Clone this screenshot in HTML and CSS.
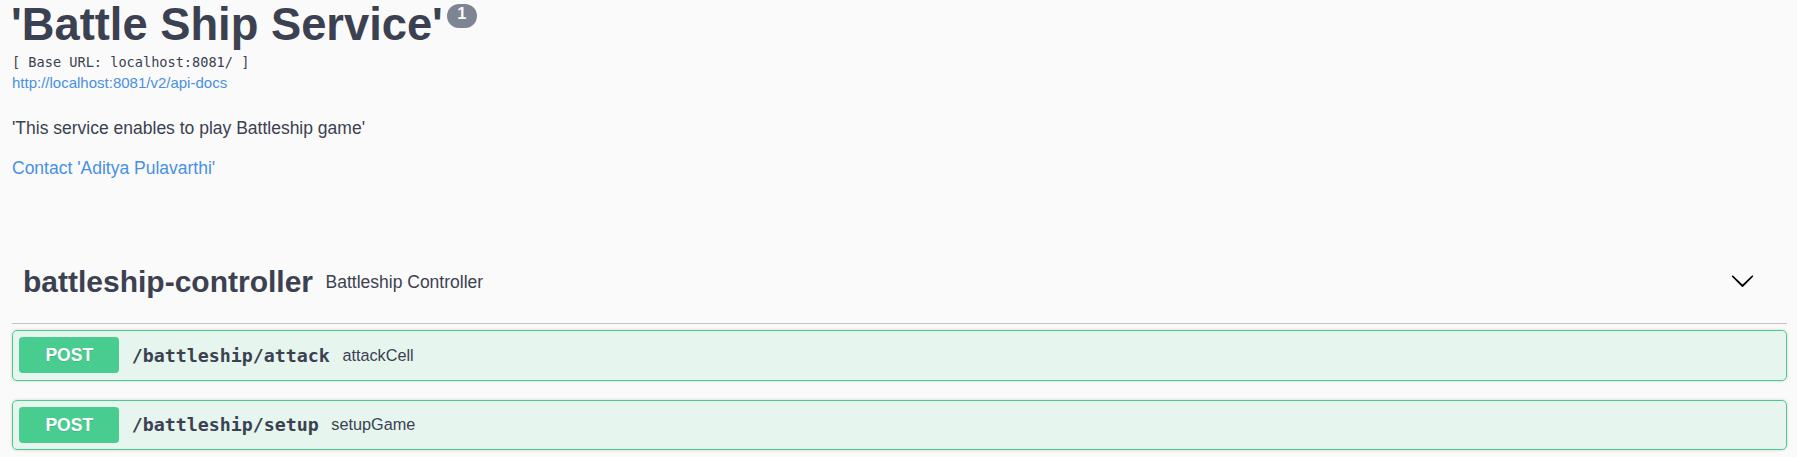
FILE: index.html
```html
<!DOCTYPE html>
<html>
<head>
<meta charset="utf-8">
<link rel="stylesheet" href="styles.css">
</head>
<body>
<div class="wrapper">
  <div class="info">
    <h2 class="title"><span class="title-text">'Battle Ship Service'</span><span class="version">1</span></h2>
    <div class="base-url">[ Base URL: localhost:8081/ ]</div>
    <a class="api-link" href="#">http://localhost:8081/v2/api-docs</a>
    <p class="description">'This service enables to play Battleship game'</p>
    <a class="contact" href="#">Contact 'Aditya Pulavarthi'</a>
  </div>

  <div class="tag-section">
    <div class="tag">
      <span class="tag-name">battleship-controller</span>
      <span class="tag-desc">Battleship Controller</span>
      <svg class="arrow" width="25" height="25" viewBox="0 0 20 20"><path d="M17.418 6.109c.272-.268.709-.268.979 0s.271.701 0 .969l-7.908 7.83c-.27.268-.707.268-.979 0l-7.908-7.83c-.27-.268-.27-.701 0-.969.271-.268.709-.268.979 0L10 13.25l7.418-7.141z"/></svg>
    </div>
    <div class="opblock">
      <div class="summary">
        <span class="method">POST</span>
        <span class="path">/battleship/attack</span>
        <span class="summary-desc">attackCell</span>
      </div>
    </div>
    <div class="opblock">
      <div class="summary">
        <span class="method">POST</span>
        <span class="path">/battleship/setup</span>
        <span class="summary-desc">setupGame</span>
      </div>
    </div>
  </div>
</div>
</body>
</html>
```

FILE: styles.css
```css
html, body {
  margin: 0;
  padding: 0;
  background: #fafafa;
}
body {
  font-family: "Liberation Sans", Arial, sans-serif;
  color: #3b4151;
}
.wrapper {
  padding: 0 10px 0 12px;
}
.info {
  display: flex;
  flex-direction: column;
  align-items: flex-start;
}
.title {
  display: flex;
  align-items: flex-start;
  margin: 0 0 0 -1px;
  height: 50px;
  line-height: 50px;
  font-size: 45.3px;
  font-weight: 700;
  color: #3b4151;
}
.version {
  margin: 4px 0 0 4px;
  width: 30px;
  height: 24px;
  border-radius: 12px;
  background: #7d8492;
  color: #fafafa;
  font-size: 16.5px;
  line-height: 19px;
  font-weight: 700;
  text-align: center;
}
.base-url {
  margin-top: 4px;
  font-family: "DejaVu Sans Mono", monospace;
  font-size: 13.6px;
  line-height: 17px;
  color: #3b4151;
}
.api-link {
  margin-top: 3px;
  font-size: 15px;
  line-height: 18px;
  color: #4990e2;
  text-decoration: none;
}
.description {
  margin: 26px 0 0;
  font-size: 17.5px;
  line-height: 21px;
}
.contact {
  margin-top: 19px;
  font-size: 17.5px;
  line-height: 21px;
  color: #4990e2;
  text-decoration: none;
}
.tag-section {
  margin-top: 62px;
}
.tag {
  display: flex;
  align-items: center;
  height: 82px;
  margin-bottom: 6px;
  padding: 0 32px 0 11px;
  border-bottom: 1px solid rgba(59, 65, 81, 0.3);
}
.tag-name {
  font-size: 30px;
  font-weight: 700;
}
.tag-desc {
  flex: 1;
  padding: 0 12.5px;
  font-size: 17.5px;
}
.arrow {
  margin-bottom: 3px;
  fill: #000;
}
.opblock {
  margin: 0 0 19px;
  border: 1px solid #49cc90;
  border-radius: 5px;
  background: rgba(73, 204, 144, 0.1);
  box-shadow: 0 0 3px rgba(0, 0, 0, 0.19);
}
.summary {
  display: flex;
  align-items: center;
  padding: 6.25px;
}
.method {
  min-width: 100px;
  height: 36px;
  line-height: 36px;
  border-radius: 3.75px;
  background: #49cc90;
  color: #fff;
  font-size: 17.5px;
  font-weight: 700;
  text-align: center;
  text-shadow: 0 1px 0 rgba(0, 0, 0, 0.1);
}
.path {
  padding: 0 12.5px;
  font-family: "DejaVu Sans Mono", monospace;
  font-size: 18.3px;
  font-weight: 700;
  color: #3b4151;
}
.summary-desc {
  font-size: 16.25px;
  color: #3b4151;
}
```
